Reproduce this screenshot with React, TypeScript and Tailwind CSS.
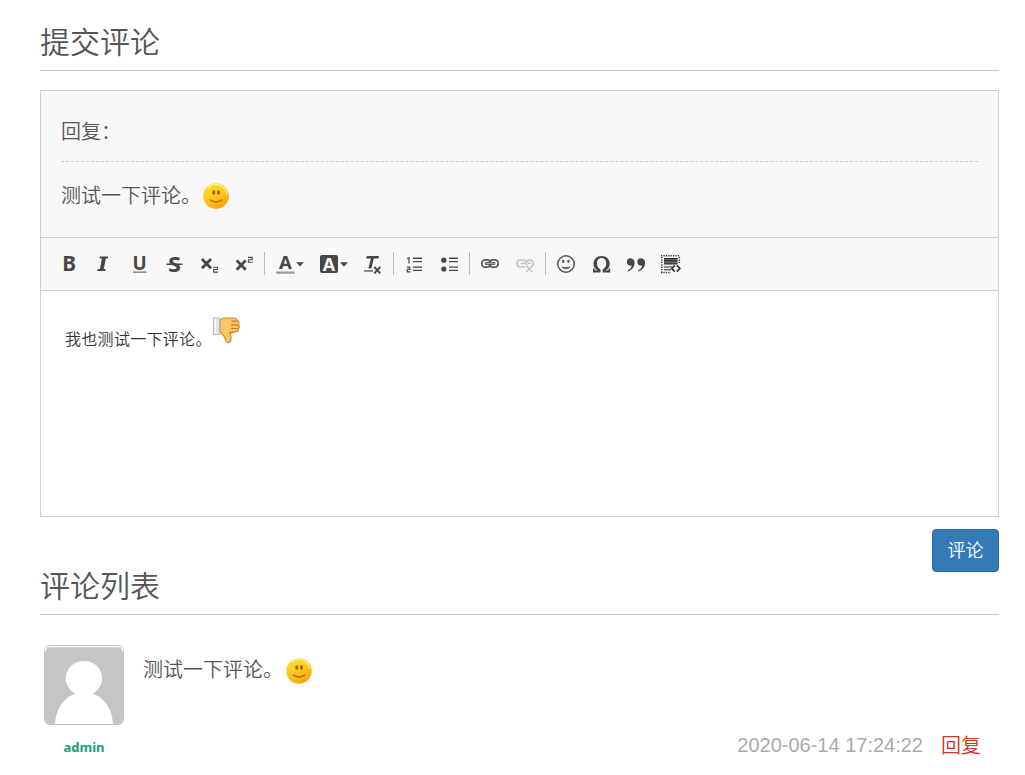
import type { ReactNode } from 'react';

const INK = '#474747';

function Tool({ x, w, label, children }: { x: number; w: number; label: string; children: ReactNode }) {
  return (
    <button type="button" aria-label={label} className="shrink-0">
      <svg width={w} height={30} viewBox={`${x} 249 ${w} 30`} className="block" fill={INK} stroke="none">
        {children}
      </svg>
    </button>
  );
}

function Separator() {
  return <span className="relative -top-px mx-[2px] h-[23px] w-px shrink-0 bg-[#bcbcbc]" />;
}

function Glyph({ x, y, size, children, className = '', width, fill }: { x: number; y: number; size: number; children: string; className?: string; width?: number; fill?: string }) {
  return (
    <text x={x} y={y} fontSize={size} textLength={width} lengthAdjust="spacingAndGlyphs" fill={fill} className={className}>
      {children}
    </text>
  );
}

function Toolbar() {
  const sans = "font-['Noto_Sans','Liberation_Sans',sans-serif] font-bold";
  return (
    <div className="flex h-[53px] items-center border-b border-[#d1d1d1] bg-[#f8f8f8] pl-[11px]">
      <Tool x={52} w={35} label="Bold"><Glyph x={62.2} y={271.4} size={20.5} width={13.8} className={sans}>B</Glyph></Tool>
      <Tool x={87} w={35} label="Italic">
        <path d="M99.8 256.6h8.4l-.4 2h-2l-2 10.4h1.9l-.5 2h-8l.5-2h2.2l2-10.4h-2.3z" />
      </Tool>
      <Tool x={122} w={35} label="Underline">
        <Glyph x={132.4} y={270} size={19} width={14.2} className={sans}>U</Glyph>
        <path d="M133 271.5h13.5v1.3H133z" fill="#777" />
      </Tool>
      <Tool x={157} w={35} label="Strikethrough">
        <Glyph x={168} y={271.6} size={20.5} width={13} className={sans}>S</Glyph>
        <path d="M166.5 263.5h16v1.5h-16z" />
      </Tool>
      <Tool x={192} w={35} label="Subscript">
        <path d="m202 259 9 9.2m0-9.2-9 9.2" stroke={INK} strokeWidth="2.8" />
        <path d="M213 267.2h4.4v2.3h-3.8v2.6h4.4" fill="none" stroke={INK} strokeWidth="1.1" />
      </Tool>
      <Tool x={227} w={35} label="Superscript">
        <path d="m236.7 260.4 9 9.4m0-9.4-9 9.4" stroke={INK} strokeWidth="2.8" />
        <path d="M248 257.4h4.2v2.3H248.4v2.6h4.3" fill="none" stroke={INK} strokeWidth="1.1" />
      </Tool>
      <Separator />
      <Tool x={267} w={43} label="Text color">
        <Glyph x={279} y={269.4} size={18.5} width={12.8} className={sans}>A</Glyph>
        <path d="M276.3 271.5h18.5v2.2h-18.5z" fill="#9b9b9b" />
        <path d="M296 262.2h8l-4 4.2z" />
      </Tool>
      <Tool x={310} w={44} label="Background color">
        <rect x="320" y="255" width="18" height="18" rx="2" />
        <Glyph x={322.8} y={270.7} size={18} width={12.4} className={sans} fill="#f8f8f8">A</Glyph>
        <path d="M340 262.2h8l-4 4.2z" />
      </Tool>
      <Tool x={354} w={37} label="Remove format">
        <path d="M367 256h12l-.6 2.4h-4.6l-2.5 10.1h-3l2.6-10.1H366z" />
        <path d="M364 270.3h9v1.3h-9z" />
        <path d="m374.3 266.8 6 6.5m0-6.5-6 6.5" stroke={INK} strokeWidth="1.9" />
      </Tool>
      <Separator />
      <Tool x={396} w={36} label="Numbered list">
        <path d="m407.2 258.8 1.8-1v5.7M407 267.2h2.8v2.1h-2.5v2.5h3" fill="none" stroke={INK} strokeWidth="1.2" />
        <path d="M413 257.6h9v1.3h-9zm0 3.3h9v1.3h-9zm0 5.5h9v1.3h-9zm0 3.3h9v1.3h-9z" />
      </Tool>
      <Tool x={432} w={35} label="Bulleted list">
        <circle cx="443.8" cy="260.2" r="2.6" /><circle cx="443.8" cy="269" r="2.6" />
        <path d="M449 257.6h9v1.3h-9zm0 3.3h9v1.3h-9zm0 5.5h9v1.3h-9zm0 3.3h9v1.3h-9z" />
      </Tool>
      <Separator />
      <Tool x={472} w={36} label="Link">
        <g fill="none" stroke="#555" strokeWidth="1.7">
          <rect x="481.8" y="259.8" width="9" height="7.4" rx="3.4" /><rect x="489.2" y="259.8" width="9" height="7.4" rx="3.4" />
        </g>
        <path d="M485.5 262.4h9.4v2.1h-9.4z" fill="#a5a5a5" stroke="#555" strokeWidth=".9" />
      </Tool>
      <Tool x={508} w={35} label="Unlink">
        <g fill="none" stroke="#c5c5c5" strokeWidth="1.7">
          <path d="M525 267h-4.5c-4.6 0-4.6-7 0-7h2.5c2 0 3 1.4 3 3.3M526.5 265v-1.5c0-2 1-3.5 3-3.5 4.6 0 4.6 5 2.3 6M520.5 263.4h5M528 263.4h3" />
          <path d="m526.3 265.5 6 6.5m0-6.5-6 6.5" strokeWidth="1.6" />
        </g>
      </Tool>
      <Separator />
      <Tool x={548} w={35} label="Smiley">
        <circle cx="566" cy="264" r="8.2" fill="none" stroke="#555" strokeWidth="1.5" />
        <path d="M562.2 260h2v2.8h-2zm5.2 0h2v2.8h-2z" />
        <path d="M562 267c2.4.7 5.6.7 8 0-1.2 2.4-6.8 2.4-8 0Z" fill="#bbb" stroke="#555" strokeWidth="1" />
      </Tool>
      <Tool x={583} w={36} label="Special character">
        <path d="M593 272.5v-4h1.3c.2 1.4.8 1.9 2.2 1.9h1.2c-2.9-1.4-4.2-3.5-4.2-6.5 0-4.7 3.2-8 8.1-8s8.1 3.3 8.1 8c0 3-1.3 5.1-4.2 6.5h1.2c1.4 0 2-.5 2.2-1.9h1.3v4h-7.5v-3.1c2.4-1.2 3.5-3 3.5-5.8 0-3.5-1.6-5.7-4.6-5.7s-4.6 2.2-4.6 5.7c0 2.8 1.1 4.6 3.5 5.8v3.1z" />
      </Tool>
      <Tool x={619} w={35} label="Quote">
        <path d="M630 258.2c2.8 0 4.6 1.6 4.6 4.5 0 4.2-2.6 7.3-7 8.8v-1c2.5-1.2 3.9-2.8 4.1-4.9-2.7.7-4.8-1.2-4.8-3.7 0-2.2 1.2-3.7 3.1-3.7ZM640.5 258.2c2.8 0 4.6 1.6 4.6 4.5 0 4.2-2.6 7.3-7 8.8v-1c2.5-1.2 3.9-2.8 4.1-4.9-2.7.7-4.8-1.2-4.8-3.7 0-2.2 1.2-3.7 3.1-3.7Z" />
      </Tool>
      <Tool x={654} w={34} label="Code snippet">
        <path d="M661 255.8h19M661.8 257v16M679.3 257v6.5M661 272.4h10" fill="none" stroke="#333" strokeWidth="1.5" strokeDasharray="1.3 1.1" />
        <path d="M664 258h13.5v6H664z" fill="#686868" />
        <path d="M664 258.5h13.5M664 260.8h13.5M664 264h13.5M664 267h8M664 269.7h7" stroke="#222" strokeWidth="1.1" />
        <path d="m674.8 265.3-3 3.2 3 3.2m2-6.4 3 3.2-3 3.2" fill="none" stroke="#333" strokeWidth="1.7" />
      </Tool>
    </div>
  );
}

function Smile() {
  return (
    <svg width="28" height="28" viewBox="0 0 28 28" className="block shrink-0">
      <defs>
        <linearGradient id="face" x1=".2" y1="0" x2=".75" y2="1">
          <stop offset="0" stopColor="#ffdb35" /><stop offset=".5" stopColor="#ffc719" /><stop offset="1" stopColor="#ff9b08" />
        </linearGradient>
      </defs>
      <circle cx="14" cy="14" r="12.8" fill="url(#face)" />
      <path d="M6 5.2c6-5.4 16.8-2.7 18.9 6.5" fill="none" stroke="#fff0ac" strokeWidth="1.2" strokeLinecap="round" />
      <ellipse cx="11.8" cy="10.6" rx="1.5" ry="2.3" fill="#986b08" /><ellipse cx="16.5" cy="10.6" rx="1.5" ry="2.3" fill="#986b08" />
      <path d="M8.6 18c3 2.6 8 2.6 11 0" fill="none" stroke="#a46c08" strokeWidth="1.6" strokeLinecap="round" />
    </svg>
  );
}

function ThumbDown() {
  return (
    <svg width="28" height="28" viewBox="0 0 28 28" className="block shrink-0">
      <path d="M8 3.5 12 2h10c2.5 0 3.4 1.3 2.9 2.8 2.2.5 2.5 2.5 1.5 3.8 1.3 1.1 1.3 3-.1 3.9.7 2-.6 3.3-2.4 3.3l-5.1.8c-.5 2.8.4 4.5.2 6.9-.3 3.9-4.5 4-5.3.7-.9-3.4-2.7-6-5.7-8.2z" fill="#fbc568" stroke="#d38b25" strokeWidth="1.2" />
      <path d="M19.5 5.2h5M19 8.8h7M19 12.5h6.5M17 16.4c1.5.4 3 .2 4.5-.4" stroke="#cf7c19" strokeWidth="1.2" fill="none" />
      <path d="M1.6 2h5.9v16.5H1.6z" fill="#e3e5e3" stroke="#b5b9b9" strokeWidth="1.1" />
      <path d="M3.2 3v14.5" stroke="#fff" strokeWidth="1.3" />
    </svg>
  );
}

function Avatar() {
  return (
    <svg width="80" height="80" viewBox="0 0 80 80" className="block shrink-0">
      <defs><clipPath id="avatar-clip"><rect width="80" height="80" rx="6" /></clipPath></defs>
      <g clipPath="url(#avatar-clip)">
        <path fill="#c5c5c5" d="M0 0h80v80H0z" />
        <path d="M1 7c0-4 2-5.4 6-5.4h66c4 0 6 1.4 6 5.4" fill="none" stroke="#fff" strokeWidth="1.2" />
        <path d="M11 79c1-15 8-26 20.5-30.5C15 40 21 16 40 16s25 24 8.5 32.5C61 53 68 64 69 79z" fill="#fff" />
      </g>
    </svg>
  );
}

export default function App() {
  return (
    <main className="h-[775px] overflow-hidden bg-white pl-10 pr-[26px] font-['Liberation_Sans','Noto_Sans_CJK_SC',sans-serif] font-[350] text-[#555]">
      <h1 className="h-[71px] border-b border-[#ccc] pt-[22px] text-[30px] leading-[42px] font-[350]">提交评论</h1>

      <section className="mt-[19px] h-[427px] border border-[#d1d1d1]">
        <div className="h-[147px] border-b border-[#d1d1d1] bg-[#f8f8f8] px-5 text-[20px]">
          <div className="h-[71px] border-b border-dashed border-[#ccc] pt-[26px] leading-[30px]">回复：</div>
          <div className="flex pt-[19px] leading-[30px]">
            <span className="w-[141px]">测试一下评论。</span>
            <div className="mt-[1px]"><Smile /></div>
          </div>
        </div>
        <Toolbar />
        <div className="flex pt-[25px] pl-[24px] text-[16px] text-[#333]">
          <span className="w-[147px] pt-[12px] leading-6 tracking-[0.3px]">我也测试一下评论。</span>
          <ThumbDown />
        </div>
      </section>

      <div className="mt-3 flex justify-end">
        <button type="button" className="h-[43px] w-[67px] rounded-[4px] border border-[#2e6da4] bg-[#337ab7] pt-[1px] text-[18px] text-white">评论</button>
      </div>

      <h2 className="-mt-[7px] h-[50px] border-b border-[#ccc] pt-px text-[30px] leading-[42px] font-[350]">评论列表</h2>

      <article className="flex h-[130px] pt-[30px] pl-1">
        <div className="flex w-20 shrink-0 flex-col items-center">
          <Avatar />
          <span className="mt-3 font-['Noto_Sans',sans-serif] text-[13px] leading-5 font-bold text-[#16a07c]">admin</span>
        </div>
        <div className="flex flex-1 flex-col justify-between pl-[19px] text-[20px]">
          <div className="flex pt-[10px] leading-[30px]">
            <span className="w-[142px]">测试一下评论。</span>
            <div className="mt-[2px]"><Smile /></div>
          </div>
          <div className="mb-[-16px] flex justify-end gap-[18px] pr-[18px] leading-[30px] font-normal">
            <time className="text-[#aaa]">2020-06-14 17:24:22</time>
            <a href="#" className="pt-px font-[350] text-[#d13325]">回复</a>
          </div>
        </div>
      </article>
    </main>
  );
}
